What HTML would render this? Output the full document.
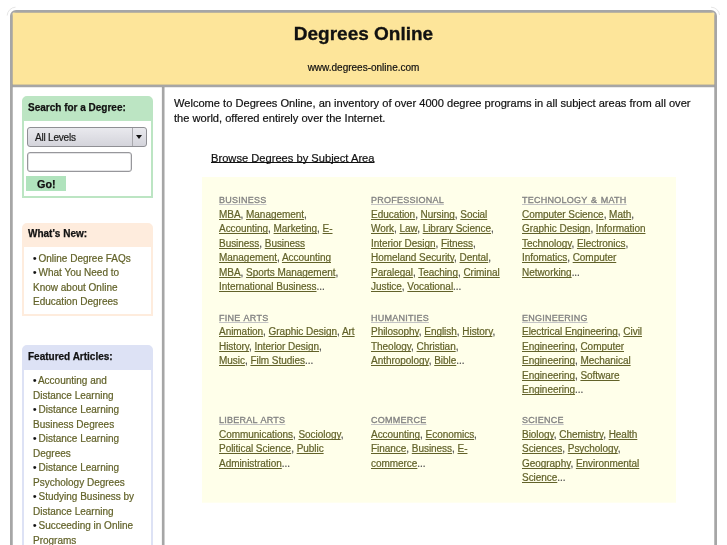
<!DOCTYPE html>
<html>
<head>
<meta charset="utf-8">
<title>Degrees Online</title>
<style>
html,body{margin:0;padding:0;background:#fff;}
body{font-family:"Liberation Sans",sans-serif;color:#111;width:727px;height:545px;overflow:hidden;position:relative;}
a{color:#626229;text-decoration:underline;}
*{text-decoration-skip-ink:none;}
#hdr h1,#hdr .url,.bh span,.bb,#sel span,#go span,#intro,#browse{will-change:transform;}
#wrap{position:absolute;left:10px;top:10px;width:703px;height:600px;border:2px solid #a6a6a6;border-radius:6px;background:#fff;overflow:hidden;}
#hdr{position:absolute;left:0;top:0;width:703px;height:73px;background:#fde59a;border-bottom:2px solid #a6a6a6;text-align:center;}
#hdr h1{position:absolute;left:0;width:703px;top:10px;margin:0;font-size:19px;line-height:24px;font-weight:bold;color:#111;letter-spacing:0;-webkit-text-stroke:0.3px;}
#hdr .url{position:absolute;left:0;width:703px;top:49px;font-size:10px;line-height:14px;color:#111;-webkit-text-stroke:0.2px;}
#side{position:absolute;left:0;top:75px;width:150px;height:540px;border-right:2px solid #a6a6a6;}
.box{position:absolute;left:10px;width:127px;border:2px solid #ccc;border-radius:5px 5px 0 0;background:#fff;}
.box .bh{height:22px;font-size:10px;font-weight:bold;line-height:19px;padding-left:4px;color:#111;}
.bh span,#go span{display:inline-block;-webkit-text-stroke:0.25px;}
.box .bb{font-size:10px;line-height:14.5px;padding:4.7px 4px 4px 9px;color:#111;-webkit-text-stroke:0.2px;}
.box .bb i{font-style:normal;margin-right:-0.8px;}
.box .bb a{text-decoration:none;color:#626229;}
#b1{top:9px;border-color:#bce5c3;height:98px;}
#b1 .bh{background:#bce5c3;height:23px;line-height:19px;}
#b2{top:136px;border-color:#feecdd;height:89px;}
#b2 .bh{background:#feecdd;line-height:17px;}
#b3{top:258px;border-color:#dde2f5;height:300px;}
#b3 .bh{background:#dde2f5;height:23px;}
#b3 .bb{padding-top:4.2px;}
#sel{position:absolute;left:3px;top:29px;width:118px;height:18px;border:1px solid #8f8f94;border-radius:3px;background:linear-gradient(#e9e9ee,#d4d4db);font-size:10px;line-height:19px;}
#sel span{position:absolute;left:6.7px;top:0;letter-spacing:-0.2px;-webkit-text-stroke:0.2px;color:#1a1a1a;}
#sel i{position:absolute;left:104px;top:0;width:1px;height:18px;background:#a9a9ae;}
#sel b{position:absolute;left:107.8px;top:7px;width:0;height:0;border-left:3.8px solid transparent;border-right:3.8px solid transparent;border-top:4.3px solid #111;}
#inp{position:absolute;left:3px;top:54px;width:103px;height:18px;border:1px solid #97979b;box-shadow:inset 0 0 0 0.5px rgba(150,150,155,0.5);border-radius:3px;background:#fff;}
#go{position:absolute;left:2px;top:78px;width:40px;height:15px;background:#b0e3bd;font-size:10.8px;font-weight:bold;line-height:17px;text-align:center;color:#111;overflow:hidden;}
#main{position:absolute;left:152px;top:75px;width:551px;height:540px;}
#intro{position:absolute;left:10px;top:9px;width:530px;font-size:11.1px;line-height:15.3px;color:#111;-webkit-text-stroke:0.2px;padding-top:0.1px;}
#browse{position:absolute;left:47px;top:64px;font-size:11.15px;line-height:15px;color:#111;text-decoration:underline;text-decoration-thickness:1.4px;text-underline-offset:0px;white-space:nowrap;-webkit-text-stroke:0.2px;}
#panel{position:absolute;left:38px;top:90px;width:474px;height:325px;background:#ffffea;box-shadow:0 1px 0 rgba(255,255,234,0.7);}
.c{position:absolute;width:150px;letter-spacing:-0.04px;font-size:10px;line-height:14.55px;color:#505050;white-space:nowrap;-webkit-text-stroke:0.2px;will-change:transform;}
.c a{text-decoration-thickness:1.3px;text-underline-offset:1.2px;}
.c h3{margin:0;height:14.55px;font-size:9px;line-height:14.55px;font-weight:normal;letter-spacing:0.24px;word-spacing:0.9px;color:#828282;position:relative;top:0px;-webkit-text-stroke:0.32px;}
.c h3 span{text-decoration:underline;text-decoration-color:#c4c4c4;text-decoration-thickness:1.4px;text-underline-offset:1.4px;}
.x1{left:17.3px}.x2{left:169.3px}.x3{left:320px}
.y1{top:16px}.y2{top:133px;padding-top:0.7px}.y3{top:236px}
.y2 h3{top:0.5px}
.e{position:absolute;background:rgba(160,160,160,0.7);}
</style>
</head>
<body>
<svg style="position:absolute;left:0;top:0" width="727" height="30"><path d="M7.2 15.5 A8.7 8.7 0 0 1 15.5 7.2" fill="none" stroke="#e6e6e6" stroke-width="1"/><path d="M711 7.2 A8.7 8.7 0 0 1 719.6 15" fill="none" stroke="#e6e6e6" stroke-width="1"/></svg>
<div id="wrap">
  <div id="hdr">
    <h1>Degrees Online</h1>
    <div class="url">www.degrees-online.com</div>
  </div>
  <div id="side">
    <div class="box" id="b1">
      <div class="bh"><span>Search for a Degree:</span></div>
      <div id="sel"><span>All Levels</span><i></i><b></b></div>
      <div id="inp"></div>
      <div id="go"><span>Go!</span></div>
    </div>
    <div class="box" id="b2">
      <div class="bh"><span>What's New:</span></div>
      <div class="bb"><i>&bull;</i> <a>Online Degree FAQs</a><br><i>&bull;</i> <a>What You Need to<br>Know about Online<br>Education Degrees</a></div>
    </div>
    <div class="box" id="b3">
      <div class="bh"><span>Featured Articles:</span></div>
      <div class="bb"><i>&bull;</i> <a>Accounting and<br>Distance Learning</a><br><i>&bull;</i> <a>Distance Learning<br>Business Degrees</a><br><i>&bull;</i> <a>Distance Learning<br>Degrees</a><br><i>&bull;</i> <a>Distance Learning<br>Psychology Degrees</a><br><i>&bull;</i> <a>Studying Business by<br>Distance Learning</a><br><i>&bull;</i> <a>Succeeding in Online<br>Programs</a><br><i>&bull;</i> <a>Online Degree<br>Accreditation</a></div>
    </div>
  </div>
  <div class="e" style="left:0;top:0;width:1px;height:600px;z-index:5"></div>
  <div class="e" style="left:702px;top:0;width:1px;height:600px;z-index:5"></div>
  <div class="e" style="left:0;top:0;width:703px;height:1px;z-index:5"></div>
  <div class="e" style="left:0;top:72px;width:703px;height:1px;z-index:5;background:rgba(150,150,150,0.35)"></div>
  <div class="e" style="left:0;top:75px;width:703px;height:1px;z-index:5;background:rgba(150,150,150,0.2)"></div>
  <div class="e" style="left:152px;top:75px;width:1px;height:600px;z-index:5;background:rgba(150,150,150,0.45)"></div>
  <div class="e" style="left:149px;top:75px;width:1px;height:600px;z-index:5;background:rgba(150,150,150,0.1)"></div>
  <div id="main">
    <div id="intro">Welcome to Degrees Online, an inventory of over 4000 degree programs in all subject areas from all over<br>the world, offered entirely over the Internet.</div>
    <div id="browse">Browse Degrees by Subject Area</div>
    <div id="panel">
      <div class="c x1 y1"><h3><span>BUSINESS</span></h3><a>MBA</a>, <a>Management</a>,<br><a>Accounting</a>, <a>Marketing</a>, <a>E-<br>Business</a>, <a>Business<br>Management</a>, <a>Accounting<br>MBA</a>, <a>Sports Management</a>,<br><a>International Business</a>...</div>
      <div class="c x2 y1"><h3><span>PROFESSIONAL</span></h3><a>Education</a>, <a>Nursing</a>, <a>Social<br>Work</a>, <a>Law</a>, <a>Library Science</a>,<br><a>Interior Design</a>, <a>Fitness</a>,<br><a>Homeland Security</a>, <a>Dental</a>,<br><a>Paralegal</a>, <a>Teaching</a>, <a>Criminal<br>Justice</a>, <a>Vocational</a>...</div>
      <div class="c x3 y1"><h3><span>TECHNOLOGY &amp; MATH</span></h3><a>Computer Science</a>, <a>Math</a>,<br><a>Graphic Design</a>, <a>Information<br>Technology</a>, <a>Electronics</a>,<br><a>Infomatics</a>, <a>Computer<br>Networking</a>...</div>
      <div class="c x1 y2"><h3><span>FINE ARTS</span></h3><a>Animation</a>, <a>Graphic Design</a>, <a>Art<br>History</a>, <a>Interior Design</a>,<br><a>Music</a>, <a>Film Studies</a>...</div>
      <div class="c x2 y2"><h3><span>HUMANITIES</span></h3><a>Philosophy</a>, <a>English</a>, <a>History</a>,<br><a>Theology</a>, <a>Christian</a>,<br><a>Anthropology</a>, <a>Bible</a>...</div>
      <div class="c x3 y2"><h3><span>ENGINEERING</span></h3><a>Electrical Engineering</a>, <a>Civil<br>Engineering</a>, <a>Computer<br>Engineering</a>, <a>Mechanical<br>Engineering</a>, <a>Software<br>Engineering</a>...</div>
      <div class="c x1 y3"><h3><span>LIBERAL ARTS</span></h3><a>Communications</a>, <a>Sociology</a>,<br><a>Political Science</a>, <a>Public<br>Administration</a>...</div>
      <div class="c x2 y3"><h3><span>COMMERCE</span></h3><a>Accounting</a>, <a>Economics</a>,<br><a>Finance</a>, <a>Business</a>, <a>E-<br>commerce</a>...</div>
      <div class="c x3 y3"><h3><span>SCIENCE</span></h3><a>Biology</a>, <a>Chemistry</a>, <a>Health<br>Sciences</a>, <a>Psychology</a>,<br><a>Geography</a>, <a>Environmental<br>Science</a>...</div>
    </div>
  </div>
</div>
</body>
</html>
